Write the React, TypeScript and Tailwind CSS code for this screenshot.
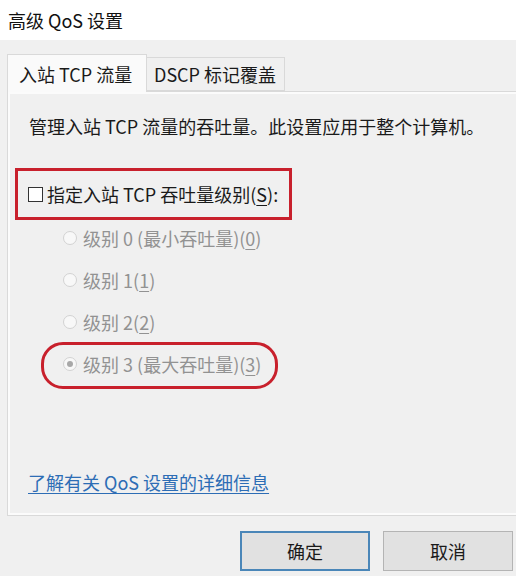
import React from "react";

const FONT = { fontFamily: '"Noto Sans CJK SC", "Noto Sans", sans-serif' };

function Radio({ checked }: { checked?: boolean }) {
  return (
    <span className="w-[14px] h-[14px] rounded-full border border-[#d2d2d2] bg-[#f8f8f8] flex items-center justify-center shrink-0">
      {checked ? <span className="w-[6px] h-[6px] rounded-full bg-[#a8a8a8]" /> : null}
    </span>
  );
}

export default function App() {
  const rows: { pre: string; key: string; checked?: boolean; mark?: boolean }[] = [
    { pre: "级别 0 (最小吞吐量)", key: "0" },
    { pre: "级别 1", key: "1" },
    { pre: "级别 2", key: "2" },
    { pre: "级别 3 (最大吞吐量)", key: "3", checked: true, mark: true },
  ];
  return (
    <div className="w-[516px] h-[576px] bg-[#f0f0f0] overflow-hidden flex flex-col text-[#1a1a1a]" style={FONT}>
      <div className="h-[40px] bg-white flex items-center pl-[8px] text-[18px] leading-none text-[#111]">
        高级 QoS 设置
      </div>
      <div className="pl-[7px] pt-[14px]">
        <div className="flex items-end h-[38px] relative z-10">
          <div className="w-[140px] h-[38px] bg-[#fafafa] border border-b-0 border-[#d9d9d9] flex items-center pl-[11px] text-[18px] leading-none">
            入站 TCP 流量
          </div>
          <div className="w-[138px] h-[34px] mb-[1px] bg-[#f0f0f0] border border-l-0 border-[#d9d9d9] flex items-center pl-[7px] text-[18px] leading-none">
            DSCP 标记覆盖
          </div>
        </div>
        <div className="w-[520px] h-[425px] -mt-px border border-[#d9d9d9] bg-[#f0f0f0]">
          <div className="h-full border-2 border-[#fbfbfb] flex flex-col">
            <div className="mt-[20px] ml-[19px] text-[18px] leading-[24px]">
              管理入站 TCP 流量的吞吐量。此设置应用于整个计算机。
            </div>
            <div className="mt-[30px] ml-[5px] w-[277px] h-[52px] border-[3.5px] border-[#c8202c] flex items-center pl-[10px]">
              <span className="w-[15px] h-[15px] border border-[#333] bg-white shrink-0" />
              <span className="ml-[4px] text-[18px] leading-[24px]">
                指定入站 TCP 吞吐量级别(<span className="underline underline-offset-[3px]">S</span>):
              </span>
            </div>
            <div className="-mt-[3px] ml-[53px] flex flex-col">
              {rows.map((r) => (
                <div key={r.key} className="relative h-[42px] flex items-center">
                  <Radio checked={r.checked} />
                  <span className="ml-[6px] text-[18px] leading-[24px] text-[#929292]">
                    {r.pre}(<span className="underline underline-offset-[3px]">{r.key}</span>)
                  </span>
                  {r.mark ? (
                    <span className="absolute left-[-22px] top-[-1px] w-[237px] h-[47px] border-[3px] border-[#c8202c] rounded-[22px]" />
                  ) : null}
                </div>
              ))}
            </div>
            <div className="flex-1" />
            <div className="mb-[19px] ml-[18px] text-[18px] leading-[24px] text-[#2d6db5] underline underline-offset-[3px]">
              了解有关 QoS 设置的详细信息
            </div>
          </div>
        </div>
      </div>
      <div className="mt-[15px] flex justify-end gap-[13px] pr-[3px]">
        <div className="w-[130px] h-[40px] bg-[#e1e1e1] border-2 border-[#4a86b8] flex items-center justify-center text-[18px] leading-none">
          确定
        </div>
        <div className="w-[130px] h-[40px] bg-[#e1e1e1] border border-[#b4b4b4] flex items-center justify-center text-[18px] leading-none">
          取消
        </div>
      </div>
    </div>
  );
}
